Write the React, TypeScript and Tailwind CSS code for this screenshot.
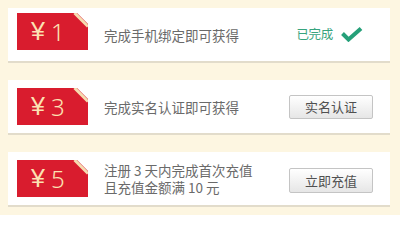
import React from "react";

type Item = {
  amount: string;
  lines: string[];
  right: "done" | "button";
  label?: string;
  badgeCls: string;
};

const items: Item[] = [
  { amount: "1", lines: ["完成手机绑定即可获得"], right: "done", badgeCls: "self-start mt-[5px]" },
  { amount: "3", lines: ["完成实名认证即可获得"], right: "button", label: "实名认证", badgeCls: "self-center" },
  { amount: "5", lines: ["注册 3 天内完成首次充值", "且充值金额满 10 元"], right: "button", label: "立即充值", badgeCls: "self-center" },
];

function Badge({ amount, cls }: { amount: string; cls: string }) {
  return (
    <div className={`relative w-[71px] h-[37px] bg-[#d91c2e] flex items-center pl-[14px] shrink-0 ${cls}`}>
      <span className="text-[#fce2b3] text-[25px] leading-none" style={{ fontFamily: '"Liberation Sans", "Noto Sans", sans-serif' }}>
        ¥
      </span>
      <span className="ml-[6px] text-[#fce2b3] text-[24px] leading-none font-light" style={{ fontFamily: '"Noto Sans", "Noto Sans CJK SC", sans-serif' }}>
        {amount}
      </span>
      <svg className="absolute top-0 right-0" width="16" height="16" viewBox="0 0 16 16">
        <polygon points="5,0 16,0 16,11" fill="#ffffff" />
        <line x1="2.5" y1="0" x2="16" y2="13.5" stroke="#f6dcb0" strokeWidth="3" />
      </svg>
    </div>
  );
}

export default function App() {
  return (
    <div
      className="w-[400px] h-[215px] bg-[#fdf6e1] pt-[8px] pl-[8px] flex flex-col gap-[17px] overflow-hidden"
      style={{ fontFamily: '"Noto Sans CJK SC", "Noto Sans", sans-serif' }}
    >
      {items.map((it) => (
        <div
          key={it.amount}
          className="w-[382px] h-[55px] bg-white border-b-2 border-[#e2dccb] flex items-center pl-[9px] shrink-0"
        >
          <Badge amount={it.amount} cls={it.badgeCls} />
          <div className="ml-[16px] flex-1 flex flex-col gap-[1px] text-[13.5px] leading-[16px] text-[#6a6a6a]">
            {it.lines.map((l) => (
              <div key={l}>{l}</div>
            ))}
          </div>
          {it.right === "done" ? (
            <div className="flex items-center mr-[27px] mb-[1px]">
              <span className="text-[12.5px] text-[#38a47e] tracking-[-0.3px]">已完成</span>
              <svg className="ml-[8px]" width="22" height="15" viewBox="0 0 22 15">
                <polyline points="1.5,6.5 7.5,12.5 20,1.5" fill="none" stroke="#25a079" strokeWidth="4" strokeLinejoin="miter" />
              </svg>
            </div>
          ) : (
            <div
              className={`mr-[17px] w-[84px] ${it.amount === "3" ? "h-[24px]" : "h-[25px] mt-[4px]"} border border-[#c4c4c4] rounded-[2px] bg-gradient-to-b from-[#ffffff] to-[#e6e6e6] flex items-center justify-center text-[13px] text-[#505050]`}
            >
              {it.label}
            </div>
          )}
        </div>
      ))}
    </div>
  );
}
